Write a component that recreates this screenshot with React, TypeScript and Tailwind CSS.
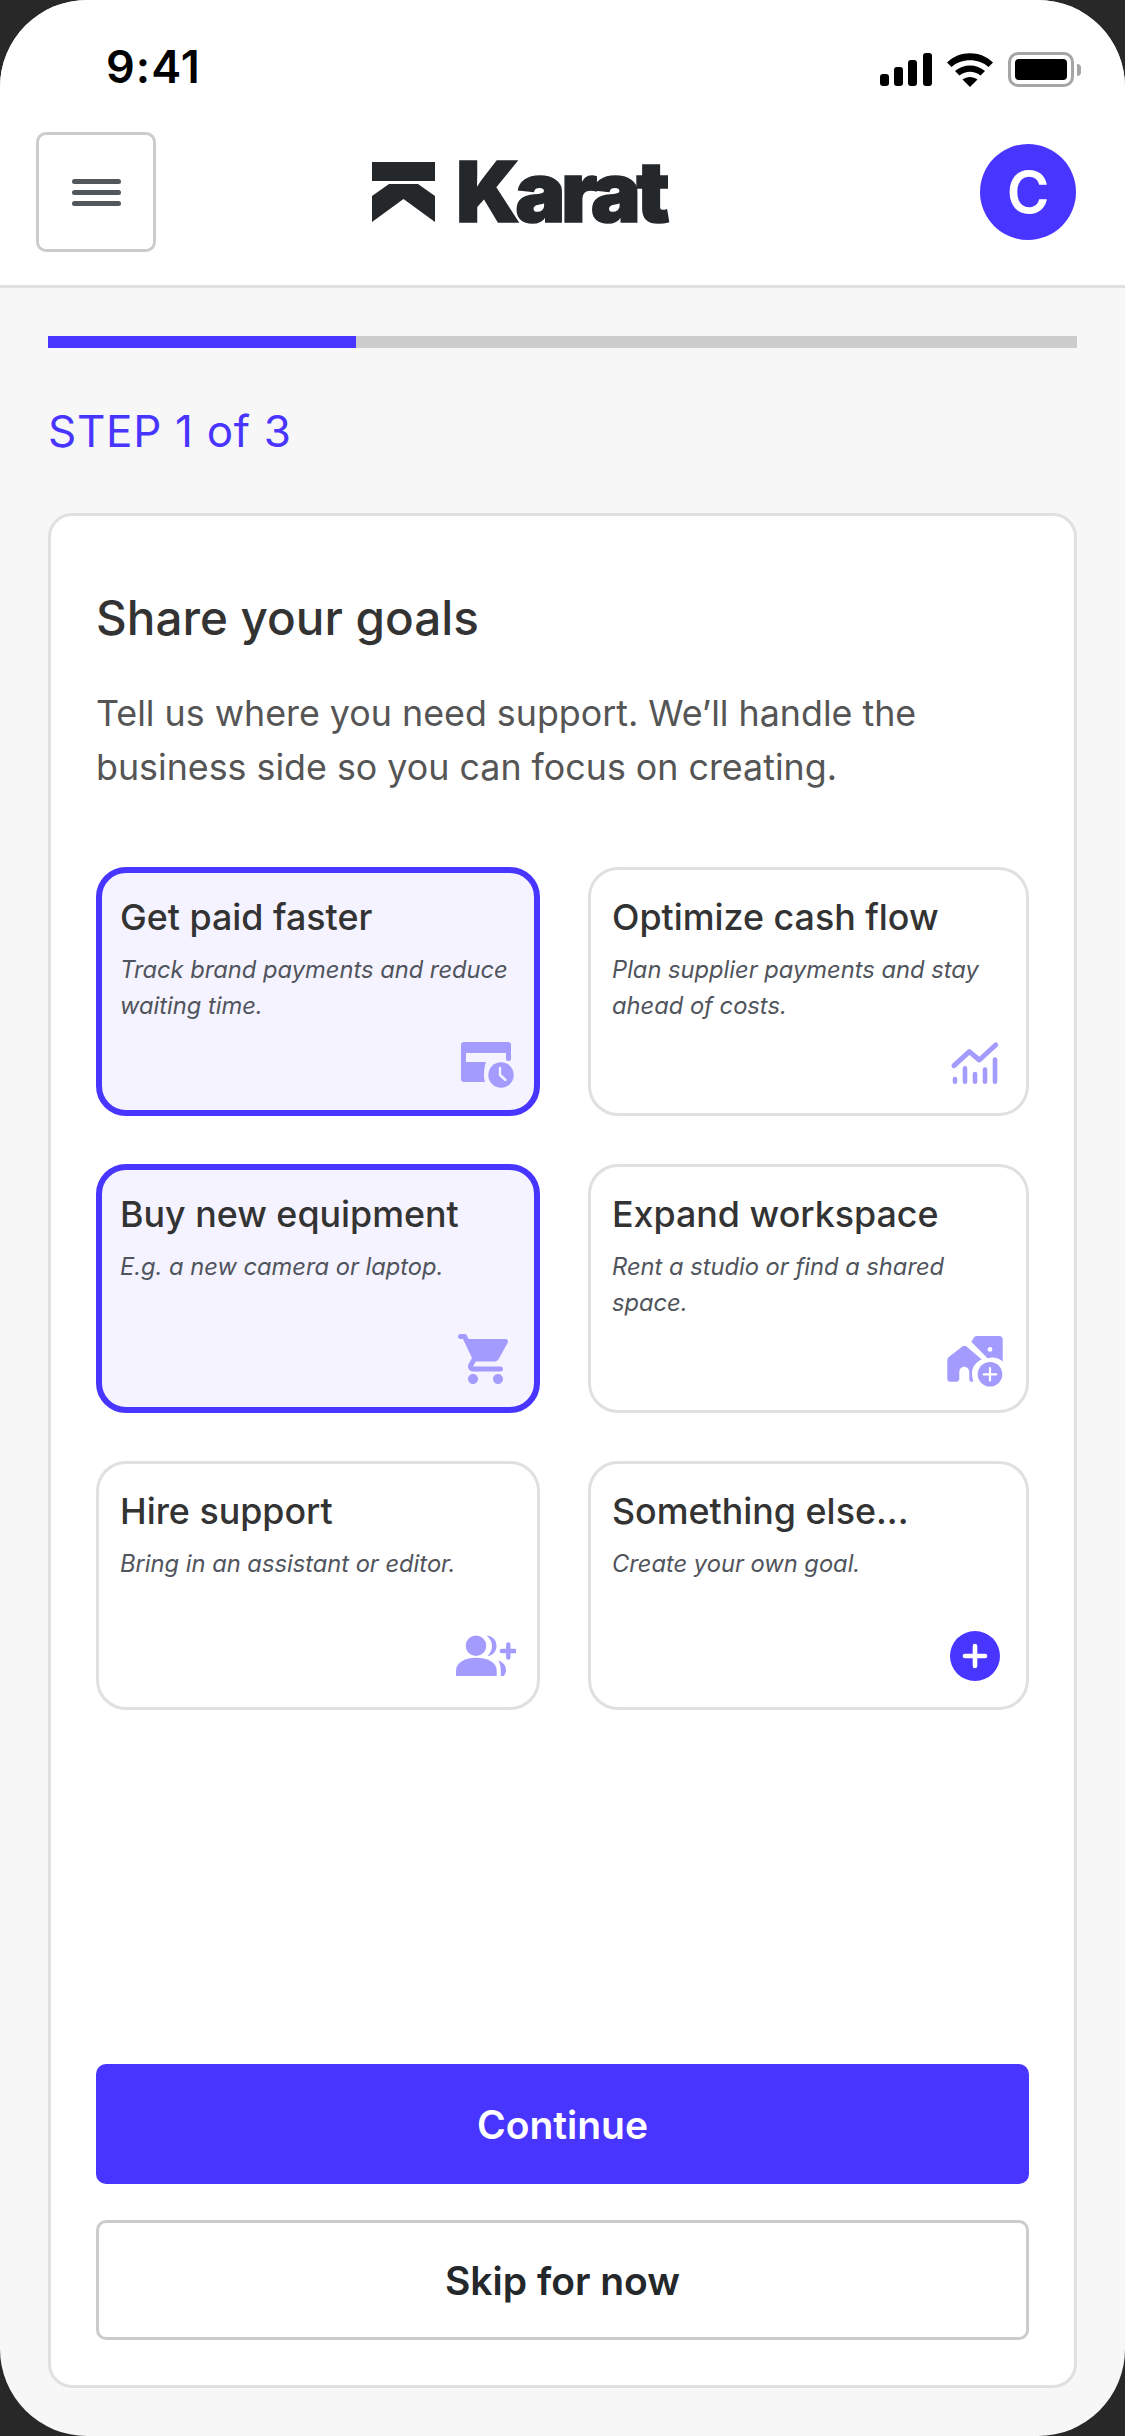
import type { ReactNode } from "react";

const ICON_CLASS = "mt-auto h-[60px] w-[60px] shrink-0 self-end";

function CardClockIcon() {
  return (
    <svg viewBox="0 0 60 60" className={ICON_CLASS} fill="#a49bff">
      <path d="M8 10H52a3 3 0 0 1 3 3V26.5a2.5 2.5 0 0 1-5 0V21H10V30H30C28.7 33.5 28 38 28 43C28 45.5 28.3 47.5 29 50H8a3 3 0 0 1-3-3V13a3 3 0 0 1 3-3Z" />
      <circle cx="45" cy="43" r="12.7" />
      <path d="M44 36V43L49.5 48" fill="none" stroke="#f5f3ff" strokeWidth="2.4" strokeLinecap="round" strokeLinejoin="round" />
    </svg>
  );
}

function ChartIcon() {
  return (
    <svg viewBox="0 0 60 60" className={ICON_CLASS} fill="none" stroke="#a49bff" strokeLinecap="round" strokeLinejoin="round">
      <path d="M9 33.7L24.3 19.7L34.3 28L50.7 13" strokeWidth="5" />
      <path d="M10 47V49.7M20 36.3V49.7M30 42V49.7M40 37.6V49.7M50 27.6V49.7" strokeWidth="4.6" />
    </svg>
  );
}

function CartIcon() {
  return (
    <svg viewBox="0 0 24 24" className={ICON_CLASS} fill="#a49bff">
      <path
        transform="translate(-0.2 0)"
        d="M7 18c-1.1 0-1.99.9-1.99 2S5.9 22 7 22s2-.9 2-2-.9-2-2-2zm10 0c-1.1 0-1.99.9-1.99 2s.89 2 1.99 2 2-.9 2-2-.9-2-2-2zm-1.45-5c.75 0 1.41-.41 1.75-1.03l3.58-6.49c.37-.66-.11-1.48-.87-1.48H5.21l-.67-1.43c-.16-.35-.52-.57-.9-.57H2c-.55 0-1 .45-1 1s.45 1 1 1h1l3.6 7.59-1.35 2.44C4.52 15.37 5.48 17 7 17h11c.55 0 1-.45 1-1s-.45-1-1-1H7l1.1-2h7.45z"
      />
    </svg>
  );
}

function HouseIcon() {
  return (
    <svg viewBox="0 0 60 60" className={ICON_CLASS} fill="#a49bff">
      <path d="M17.7 17.3C18.7 16.5 20.3 16.5 21.3 17.3L36.7 30.5C31 33 27 38 27 44C27 47 27.5 49.5 28.3 52C28.3 52.7 26.5 52.9 25.5 52.5C24.7 52 24.3 51 24.3 50V43C24.3 40 22 37.7 19.3 37.7C16.5 37.7 14.3 40 14.3 43V50C14.3 51.6 13 52.7 11.5 52.7H5C3.5 52.7 2.3 51.5 2.3 50V31C2.3 30 2.7 29 3.5 28.3Z" />
      <path
        fillRule="evenodd"
        d="M26.3 12.7L29 8.5C29.7 7.5 30.8 7 32 7H54.5C56.3 7 57.7 8.4 57.7 10.2V32.5C55 30 51 28.5 47.5 28.5C46 28.5 44.5 28.7 42.5 29.2ZM45 18a2.4 2.4 0 1 0 0 4.8a2.4 2.4 0 1 0 0-4.8Z"
      />
      <circle cx="45" cy="45.3" r="12.3" />
      <path d="M45 39V51.6M38.7 45.3H51.3" stroke="#fff" strokeWidth="2.2" strokeLinecap="round" />
    </svg>
  );
}

function PersonAddIcon() {
  return (
    <svg viewBox="0 0 60 60" className={ICON_CLASS} fill="#a49bff">
      <circle cx="20" cy="19.7" r="10.3" />
      <path d="M0 50V44.5C0 36 10 31.7 20 31.7C31 31.7 40.7 36 40.7 44.5V50Z" />
      <path d="M30.5 9.5C36.5 10 40.5 14 40.5 19.7C40.5 25 37 29.5 31.5 30C34.5 27 36 23.5 36 19.7C36 16 34 12 30.5 9.5Z" />
      <path d="M42.3 34.5C47 36 50 39.5 50 44C50 46.5 49 49 47.5 50H44.8V44.5C44.8 41 44 37.5 42.3 34.5Z" />
      <path d="M52.3 18.5V31.5M45.8 25H58.8" stroke="#a49bff" strokeWidth="4.4" strokeLinecap="round" />
    </svg>
  );
}

function PlusCircleIcon() {
  return (
    <svg viewBox="0 0 60 60" className={ICON_CLASS}>
      <circle cx="30" cy="30" r="25" fill="#4835ff" />
      <path d="M30 20V40M20 30H40" stroke="#fff" strokeWidth="4.6" strokeLinecap="round" />
    </svg>
  );
}

function StatusIcons() {
  return (
    <div className="flex items-center gap-[15px]">
      <svg viewBox="0 0 52 33" className="h-[33px] w-[52px]" fill="#000">
        <rect x="0" y="21" width="9" height="12" rx="3" />
        <rect x="14" y="14" width="9" height="19" rx="3" />
        <rect x="28" y="7" width="9" height="26" rx="3" />
        <rect x="43" y="0" width="9" height="33" rx="3" />
      </svg>
      <svg viewBox="0 0 46 34" className="h-[34px] w-[46px]" fill="#000">
        <path d="M0 9.5C12 -3 34 -3 46 9.5L41.5 14C32 5 14 5 4.5 14Z" />
        <path d="M8 18C16 10.5 30 10.5 38 18L33.5 22.5C27 17.5 19 17.5 12.5 22.5Z" />
        <path d="M23 34L15.5 26.5C20 23 26 23 30.5 26.5Z" />
      </svg>
      <div className="flex items-center">
        <div className="flex h-[35px] w-[66px] items-center rounded-[10px] border-[3px] border-[#a5a5a5] p-[4px]">
          <div className="h-full w-full rounded-[4px] bg-black" />
        </div>
        <div className="ml-[3px] h-[12px] w-[4px] rounded-r-full bg-[#a5a5a5]" />
      </div>
    </div>
  );
}

function GoalCard({ title, text, selected, icon }: { title: string; text: string; selected?: boolean; icon: ReactNode }) {
  return (
    <div
      className={`flex h-[249px] flex-col rounded-[30px] ${
        selected
          ? "border-[6px] border-[#4835ff] bg-[#f5f3ff] px-[18px] pt-[22px] pb-[18px]"
          : "border-[3px] border-[#e0e0e0] bg-white px-[21px] pt-[25px] pb-[21px]"
      }`}
    >
      <h3 className="text-[35.8px] leading-[44px] font-medium text-[#333333]">{title}</h3>
      <p className="mt-[13px] text-[23.7px] leading-[36px] text-[#50545c] italic">{text}</p>
      {icon}
    </div>
  );
}

export default function App() {
  return (
    <div className="h-[2436px] w-[1125px] bg-[#282828] font-['Inter',sans-serif]">
      <div className="flex h-full w-full flex-col overflow-hidden rounded-[87px] bg-[#f7f7f7]">
        {/* Status bar */}
        <div className="flex h-[132px] shrink-0 items-start justify-between bg-white pt-[42px] pr-[44px] pl-[106px]">
          <span className="text-[45px] leading-[50px] font-semibold tracking-[1px] text-black">9:41</span>
          <div className="pt-[10px]">
            <StatusIcons />
          </div>
        </div>

        {/* Header */}
        <header className="flex h-[156px] shrink-0 items-start border-b-[3px] border-[#e0e0e0] bg-white pr-[49px] pl-[36px]">
          <button className="flex h-[120px] w-[120px] flex-col items-center justify-center gap-[6px] rounded-[10px] border-[3px] border-[#cccccc]">
            <span className="h-[5px] w-[49px] rounded-full bg-[#52575c]" />
            <span className="h-[5px] w-[49px] rounded-full bg-[#52575c]" />
            <span className="h-[5px] w-[49px] rounded-full bg-[#52575c]" />
          </button>
          <div className="ml-[216px] flex h-[120px] items-center gap-[21px]">
            <svg viewBox="0 0 63 60" className="h-[60px] w-[63px]" fill="#24282b">
              <rect x="0" y="0" width="63" height="19" />
              <path d="M17 22H46L63 34V60L31.5 37L0 60V34Z" />
            </svg>
            <span className="text-[84px] leading-[60px] font-black tracking-[-4.5px] text-[#24282b] [-webkit-text-stroke:1.5px_#24282b]">
              Karat
            </span>
          </div>
          <div className="mt-[12px] ml-auto flex h-[96px] w-[96px] items-center justify-center rounded-full bg-[#4835ff] text-[58px] font-semibold text-white">
            C
          </div>
        </header>

        {/* Main */}
        <main className="flex min-h-0 flex-1 flex-col px-[48px] pt-[48px] pb-[48px]">
          <div className="flex h-[12px] bg-[#cccccc]">
            <div className="h-full w-[308px] bg-[#4835ff]" />
          </div>
          <p className="mt-[57px] text-[44px] leading-[52px] tracking-[0.7px] text-[#4835ff]">STEP 1 of 3</p>

          <section className="mt-[56px] flex flex-1 flex-col rounded-[24px] border-[3px] border-[#e0e0e0] bg-white px-[45px] pt-[72px] pb-[45px]">
            <h1 className="text-[47.6px] leading-[60px] font-medium text-[#333333]">Share your goals</h1>
            <p className="mt-[38px] text-[35.8px] leading-[54px] text-[#555555]">
              Tell us where you need support. We’ll handle the business side so you can focus on creating.
            </p>

            <div className="mt-[73px] grid grid-cols-[444px_441px] gap-[48px]">
              <GoalCard selected title="Get paid faster" text="Track brand payments and reduce waiting time." icon={<CardClockIcon />} />
              <GoalCard title="Optimize cash flow" text="Plan supplier payments and stay ahead of costs." icon={<ChartIcon />} />
              <GoalCard selected title="Buy new equipment" text="E.g. a new camera or laptop." icon={<CartIcon />} />
              <GoalCard title="Expand workspace" text="Rent a studio or find a shared space." icon={<HouseIcon />} />
              <GoalCard title="Hire support" text="Bring in an assistant or editor." icon={<PersonAddIcon />} />
              <GoalCard title="Something else..." text="Create your own goal." icon={<PlusCircleIcon />} />
            </div>

            <div className="mt-auto flex flex-col gap-[36px]">
              <button className="h-[120px] rounded-[10px] bg-[#4835ff] pt-[2px] text-[39px] font-semibold text-white">Continue</button>
              <button className="h-[120px] rounded-[10px] border-[3px] border-[#cccccc] bg-white pt-[2px] text-[39px] font-semibold text-[#24282b]">
                Skip for now
              </button>
            </div>
          </section>
        </main>
      </div>
    </div>
  );
}
